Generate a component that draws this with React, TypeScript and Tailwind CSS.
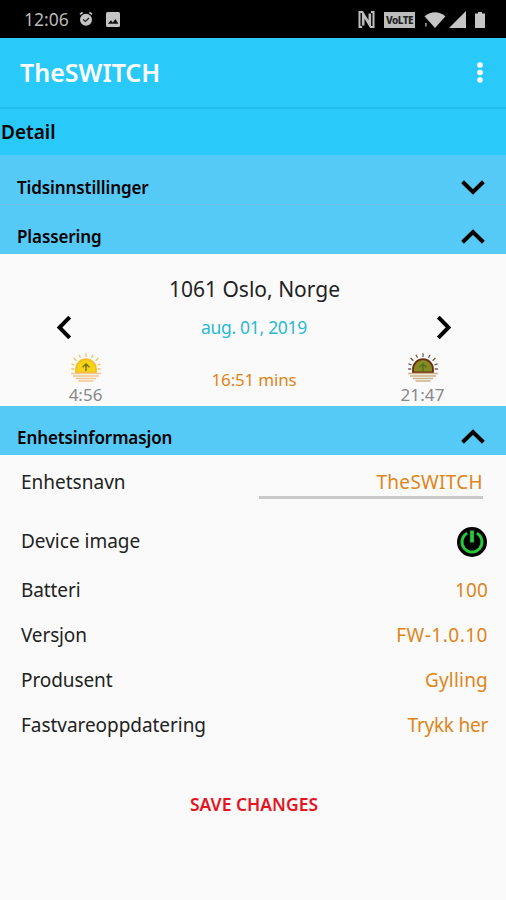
import type { ReactNode } from "react";

const rows = [
  { label: "Batteri", value: "100", labelTracking: "tracking-[-0.1px]", valueTracking: "tracking-[0.1px]" },
  { label: "Versjon", value: "FW-1.0.10", labelTracking: "tracking-[-0.15px]", valueTracking: "tracking-[0.5px]" },
  { label: "Produsent", value: "Gylling", labelTracking: "tracking-[-0.1px]", valueTracking: "tracking-[0.2px]" },
  { label: "Fastvareoppdatering", value: "Trykk her", labelTracking: "tracking-[-0.05px]", valueTracking: "tracking-[-0.25px]" },
];

function StatusBar() {
  return (
    <div className="flex h-[38px] items-center bg-black pt-[2px] pl-[24px] text-[#b9b9b9]">
      <span className="w-[55px] text-[17.5px] leading-none">12:06</span>
      <svg className="-mt-[2px] h-[16px] w-[14px]" viewBox="0 0 14 16" fill="none">
        <circle cx="7" cy="8.8" r="6" fill="#c4c4c4" />
        <path d="M1 3.4 3.6 1.4M13 3.4 10.4 1.4" stroke="#c4c4c4" strokeWidth="1.8" />
        <path d="m4.2 8.4 2.2 2 3.6-3.4" stroke="#222" strokeWidth="1.3" />
      </svg>
      <svg className="-mt-px ml-[13px] h-[15px] w-[14px]" viewBox="0 0 14 15">
        <rect width="14" height="15" rx="1.5" fill="#c4c4c4" />
        <path d="m2 11.8 2.9-3.6 1.9 2.2 2.6-3.4 3 4.8z" fill="#111" />
      </svg>

      <div className="-mt-px ml-auto flex items-center pr-[21px]">
        <svg className="h-[17px] w-[17px]" viewBox="0 0 17 17" fill="none" stroke="#bdbdbd">
          <path d="M5 1H1.5v15h2.6M12.6 16h2.9V1h-2.6" strokeWidth="2" />
          <path d="M5.2 14.5V3l6.6 11V2.5" strokeWidth="2.6" />
        </svg>
        <span className="ml-[9px] flex h-[16px] w-[31px] items-center justify-center bg-[#bdbdbd] text-[10px] leading-none font-extrabold tracking-[-0.5px] text-[#222]">
          VoLTE
        </span>
        <svg className="ml-[9px] h-[16px] w-[22px]" viewBox="0 0 22 16" fill="#c6c6c6">
          <path d="M0.5 4.3Q11-4 21.5 4.3L11 16z" />
          <path d="M0 8.5h4V16H0z" fill="#000" />
          <path d="M1 11h1.8v3.5H1z" fill="#888" />
        </svg>
        <svg className="ml-[3px] h-[17px] w-[17px]" viewBox="0 0 17 17" fill="#c6c6c6">
          <path d="M17 0v17H0z" />
        </svg>
        <svg className="ml-[9px] h-[16px] w-[10px]" viewBox="0 0 10 16" fill="#c6c6c6">
          <path d="M3 0h4v1.6h3V16H0V1.6h3z" />
        </svg>
      </div>
    </div>
  );
}

function Chevron({ className }: { className: string }) {
  return (
    <svg className={className} viewBox="0 0 24 15" fill="none" stroke="#000" strokeWidth="4">
      <path d="M1.6 13.2 12 3l10.4 10.2" />
    </svg>
  );
}

function SectionHeader({ children, open, className }: { children: ReactNode; open?: boolean; className: string }) {
  return (
    <div className={`flex items-center justify-between bg-[#56caf7] pr-[21px] pl-[17px] text-black ${className}`}>
      <h2 className="pt-px text-[17px] leading-none font-semibold tracking-[-0.1px]">{children}</h2>
      <Chevron className={open ? "h-[15px] w-[24px]" : "h-[15px] w-[24px] rotate-180"} />
    </div>
  );
}

function Sun({ body, rim, ray, sea, arrow }: { body: string; rim: string; ray: string; sea: string; arrow: string }) {
  return (
    <svg className="h-[29px] w-[32px]" viewBox="0 0 32 29" fill="none">
      <path
        d="M16 .3v3.6M9 1.8l1.5 3M23 1.8l-1.5 3M3.6 5l2.8 2.8M28.4 5l-2.8 2.8M1.5 10.8l3 1M30.5 10.8l-3 1M1.2 16h3M27.8 16h3"
        stroke={ray}
        strokeWidth="1.3"
      />
      <path d="M6 19.4v-3.2a10 10 0 0 1 20 0v3.2z" fill={body} stroke={rim} strokeWidth="1.8" />
      <path d="M16 18V11.2M12.6 14.2l3.4-3.2 3.4 3.2" stroke={arrow} strokeWidth="1.5" />
      <path d="M1 20.6h30M3 23.1h26M6 25.6h20M8.5 28.1h15" stroke={sea} strokeWidth="1.5" />
    </svg>
  );
}

function PowerIcon() {
  return (
    <svg className="mr-px h-[30px] w-[30px]" viewBox="0 0 30 30" fill="none">
      <circle cx="15" cy="15" r="15" fill="#000" />
      <path d="M10.2 6.2a10 10 0 1 0 9.6 0" stroke="#27c93a" strokeWidth="3" />
      <path d="M15 3.5v12" stroke="#27c93a" strokeWidth="3.8" />
    </svg>
  );
}

export default function App() {
  return (
    <div className="h-[900px] w-[506px] overflow-hidden bg-[#fafafa] font-['Noto_Sans',sans-serif] text-[#222]">
      <StatusBar />

      <header className="flex h-[71px] items-center justify-between border-b-2 border-[#22bdec] bg-[#29cafa] pr-[23px] pl-[20px]">
        <h1 className="text-[25px] leading-none font-semibold text-white">TheSWITCH</h1>
        <svg className="h-[22px] w-[6px]" viewBox="0 0 6 22" fill="#fff">
          <circle cx="3" cy="3" r="2.8" />
          <circle cx="3" cy="10.5" r="2.8" />
          <circle cx="3" cy="18" r="2.8" />
        </svg>
      </header>
      <div className="flex h-[46px] items-center bg-[#29cafa] pl-px text-[19px] leading-none font-semibold text-black">
        Detail
      </div>

      <SectionHeader className="h-[50px] border-b border-[#6bbfe3] pt-[15px]">Tidsinnstillinger</SectionHeader>
      <SectionHeader open className="h-[49px] pt-[13px]">Plassering</SectionHeader>

      {/* Location and sun times */}
      <section className="h-[152px] pt-[24px] text-center">
        <p className="pl-[3px] text-[21px] leading-[22px]">1061 Oslo, Norge</p>
        <div className="mt-[14px] flex h-[26px] items-center justify-between pr-[50px] pl-[52px]">
          <Chevron className="h-[15px] w-[24px] -rotate-90" />
          <span className="pt-px text-[17.5px] leading-none tracking-[-0.3px] text-[#2bb9d3]">aug. 01, 2019</span>
          <Chevron className="h-[15px] w-[24px] rotate-90" />
        </div>
        <div className="mt-[13px] grid grid-cols-[85px_1fr_85px] pr-[41px] pl-[43px] text-[#888]">
          <div className="flex flex-col items-center">
            <Sun body="#f6d414" rim="#f3bd2c" ray="#f0c65c" sea="#f4c68d" arrow="#77701d" />
            <span className="mt-[4px] text-[17px] leading-[18px]">4:56</span>
          </div>
          <span className="mt-[17px] text-[17px] leading-[20px] tracking-[-0.2px] text-[#df8518]">16:51 mins</span>
          <div className="flex flex-col items-center">
            <Sun body="#858b22" rim="#6b2d10" ray="#6e5848" sea="#cbb088" arrow="#55701f" />
            <span className="mt-[4px] text-[17px] leading-[18px] tracking-[0.1px]">21:47</span>
          </div>
        </div>
      </section>

      <SectionHeader open className="h-[49px] pt-[12px]">Enhetsinformasjon</SectionHeader>

      {/* Device details */}
      <section className="pt-px pr-[18px] pl-[21px] text-[19px]">
        <div className="flex h-[52px] items-start justify-between">
          <span className="pt-[13px] leading-[26px]">Enhetsnavn</span>
          <div className="mr-[5px] h-[43px] w-[224px] border-b-3 border-[#c9c9c9] pt-[13px] text-right leading-[26px] tracking-[0.3px] text-[#df8518]">
            TheSWITCH
          </div>
        </div>
        <div className="flex h-[59px] items-center justify-between pt-[8px]">
          <span>Device image</span>
          <PowerIcon />
        </div>
        <div className="pt-px">
          {rows.map((row) => (
            <div key={row.label} className="flex h-[45px] items-center justify-between">
              <span className={row.labelTracking}>{row.label}</span>
              <span className={`text-[#df8518] ${row.valueTracking}`}>{row.value}</span>
            </div>
          ))}
        </div>
      </section>

      <div className="mt-[46px] flex justify-center pl-[2px]">
        <button className="text-[17.5px] leading-[20px] font-semibold text-[#e5141f]">SAVE CHANGES</button>
      </div>
    </div>
  );
}
